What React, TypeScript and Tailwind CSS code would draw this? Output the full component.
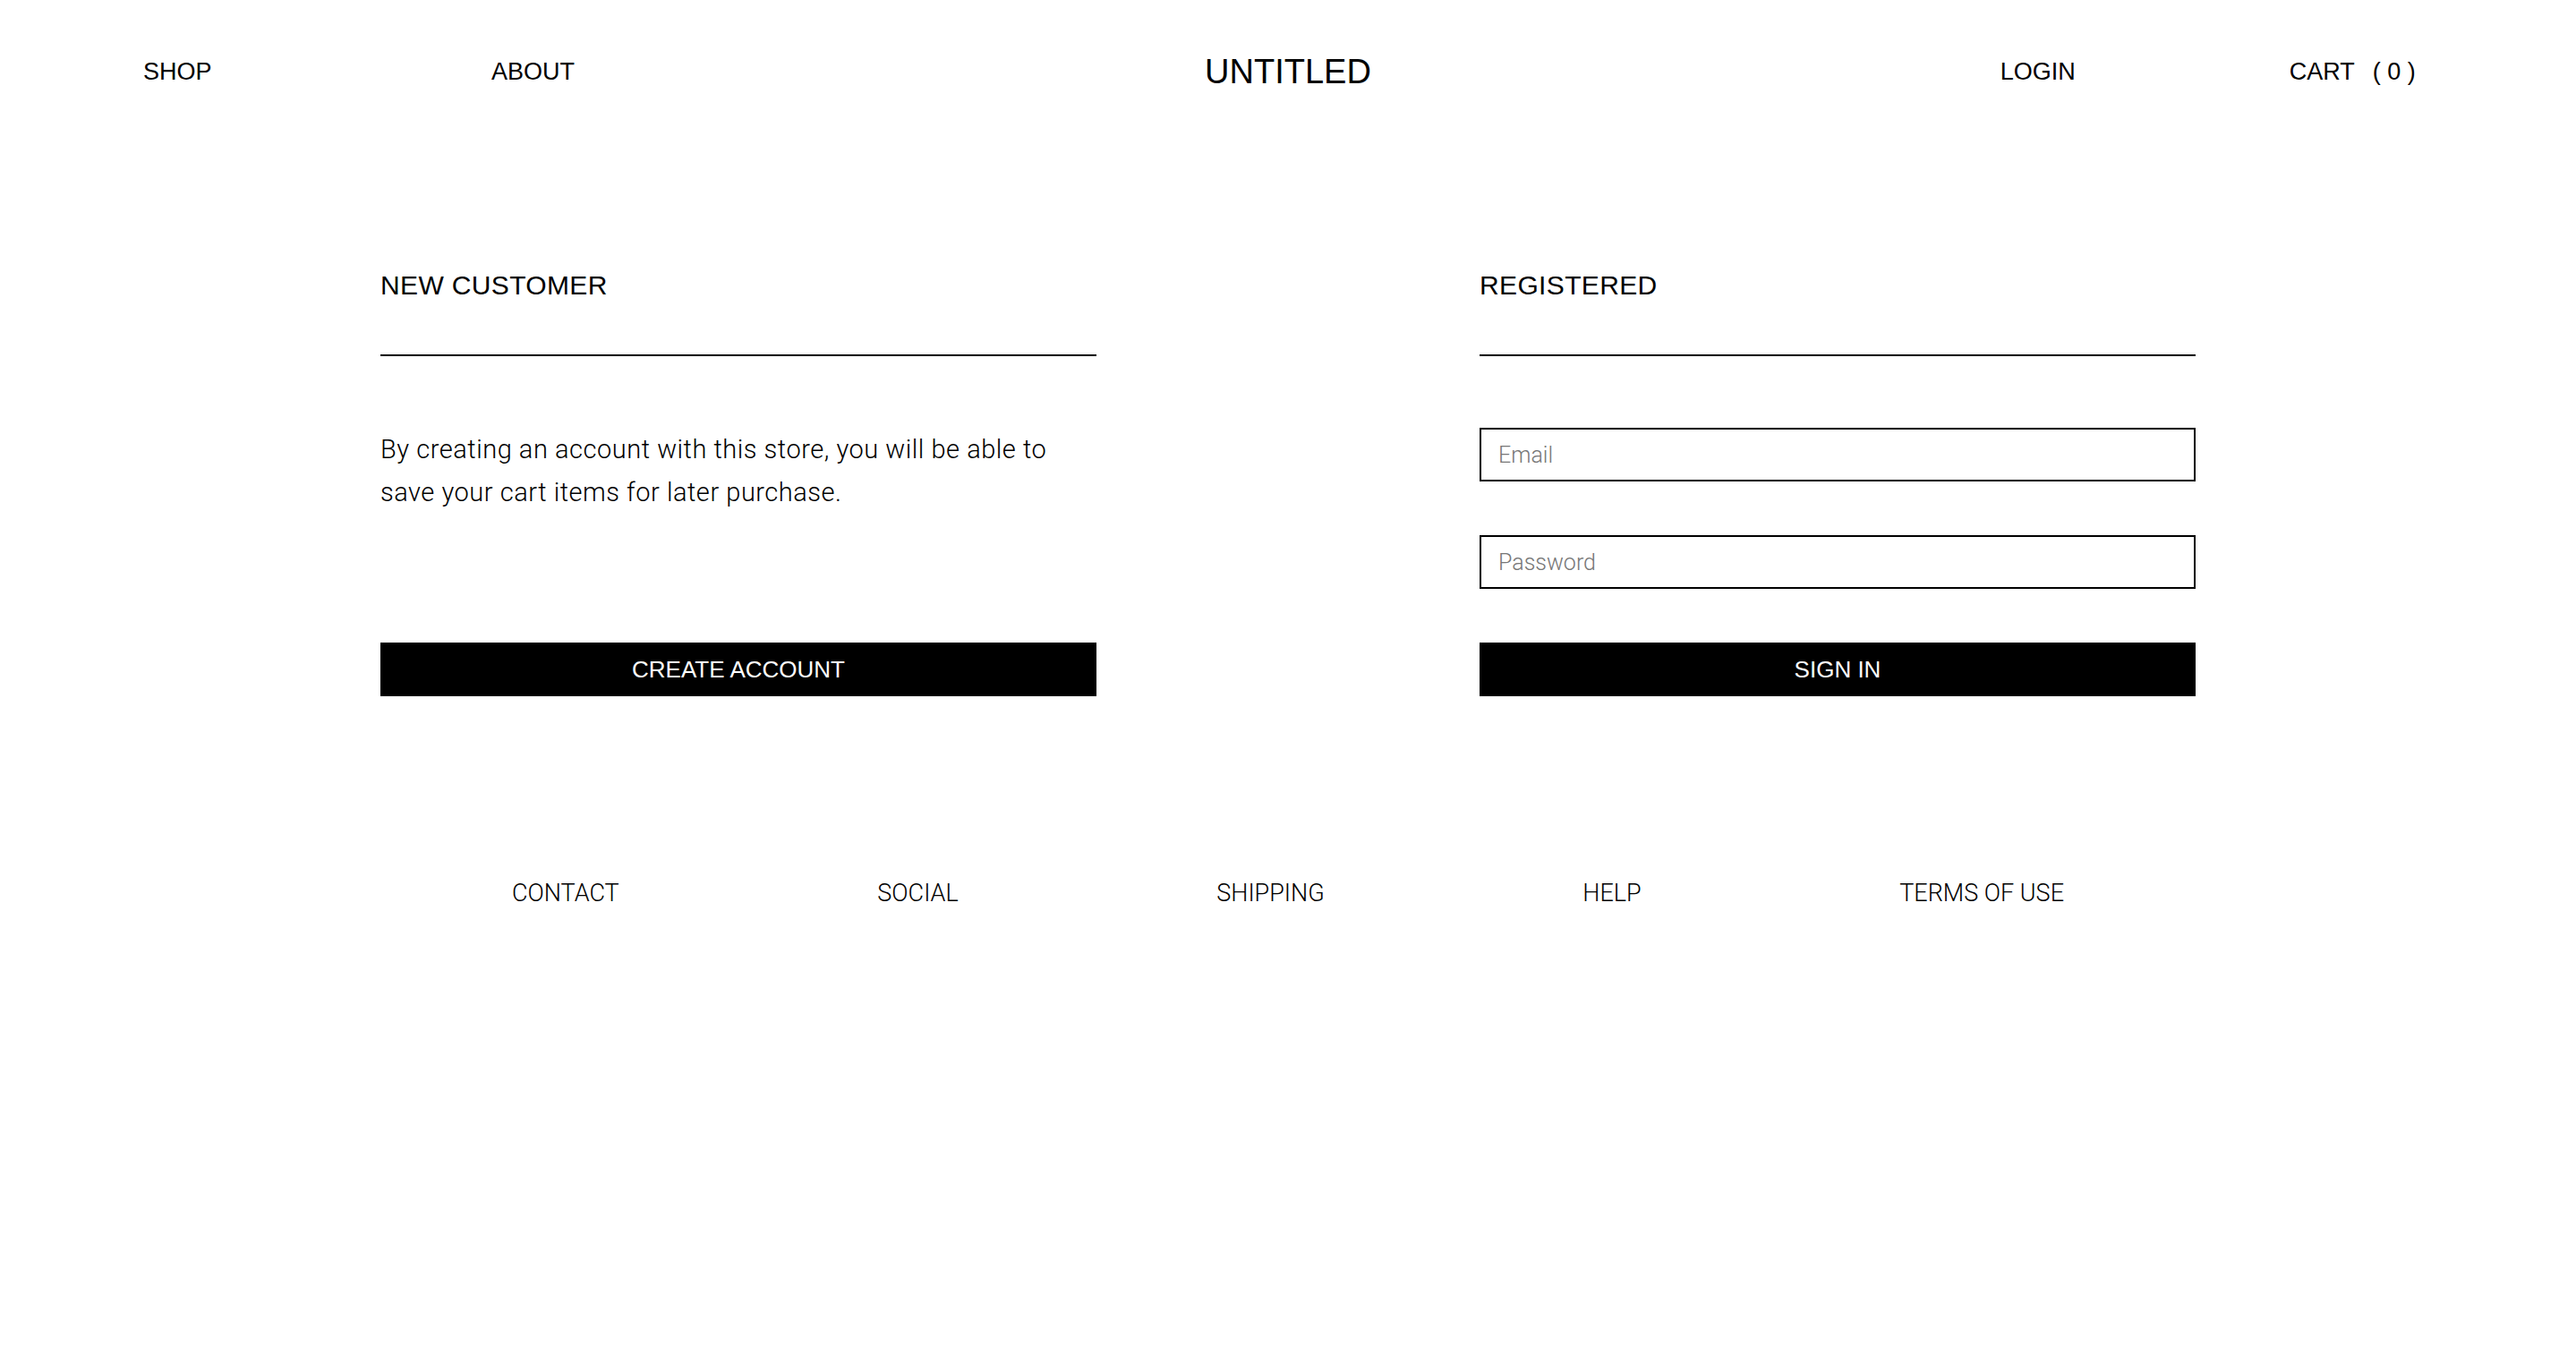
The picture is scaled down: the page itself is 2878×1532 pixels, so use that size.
import React from "react";

const sans = "font-['Liberation_Sans',Arial,sans-serif]";
const light = "font-['Roboto',sans-serif] font-light";

export default function App() {
  return (
    <div className={`min-h-[1532px] w-full bg-white text-black ${sans}`}>
      <header className="grid h-[160px] grid-cols-3 items-center">
        <nav className="flex items-center pl-[160px] text-[27px] leading-[32px]">
          <a className="w-[389px]">SHOP</a>
          <a>ABOUT</a>
        </nav>
        <div className="text-center text-[38px] leading-[44px]">UNTITLED</div>
        <nav className="flex items-center pl-[316px] text-[27px] leading-[32px]">
          <a className="w-[323px]">LOGIN</a>
          <a className="whitespace-pre">CART<span className="ml-[20px]">( 0 )</span></a>
        </nav>
      </header>

      <main className="flex justify-center gap-[428px] pt-[140px]">
        <section className="w-[800px]">
          <h2 className="text-[30px] leading-[37px] tracking-[0.012em]">NEW CUSTOMER</h2>
          <div className="mt-[59px] h-[2px] bg-black" />
          <p className={`mt-[80px] text-[29px] leading-[48px] tracking-[0.018em] ${light}`}>
            By creating an account with this store, you will be able to
            <br />
            save your cart items for later purchase.
          </p>
          <button className="mt-[144px] flex h-[60px] w-full items-center justify-center bg-black text-[26px] text-white">
            CREATE ACCOUNT
          </button>
        </section>

        <section className="w-[800px]">
          <h2 className="text-[30px] leading-[37px] tracking-[0.012em]">REGISTERED</h2>
          <div className="mt-[59px] h-[2px] bg-black" />
          <input
            type="email"
            placeholder="Email"
            className={`mt-[80px] block h-[60px] w-full border-2 border-black pl-[19px] text-[25px] outline-none placeholder:text-[#777777] ${light}`}
          />
          <input
            type="password"
            placeholder="Password"
            className={`mt-[60px] block h-[60px] w-full border-2 border-black pl-[19px] text-[25px] outline-none placeholder:text-[#777777] ${light}`}
          />
          <button className="mt-[60px] flex h-[60px] w-full items-center justify-center bg-black text-[26px] text-white">
            SIGN IN
          </button>
        </section>
      </main>

      <footer className={`mt-[205px] flex justify-between px-[572px] text-[27px] leading-[30px] ${light}`}>
        <a>CONTACT</a>
        <a>SOCIAL</a>
        <a>SHIPPING</a>
        <a>HELP</a>
        <a>TERMS OF USE</a>
      </footer>
    </div>
  );
}
